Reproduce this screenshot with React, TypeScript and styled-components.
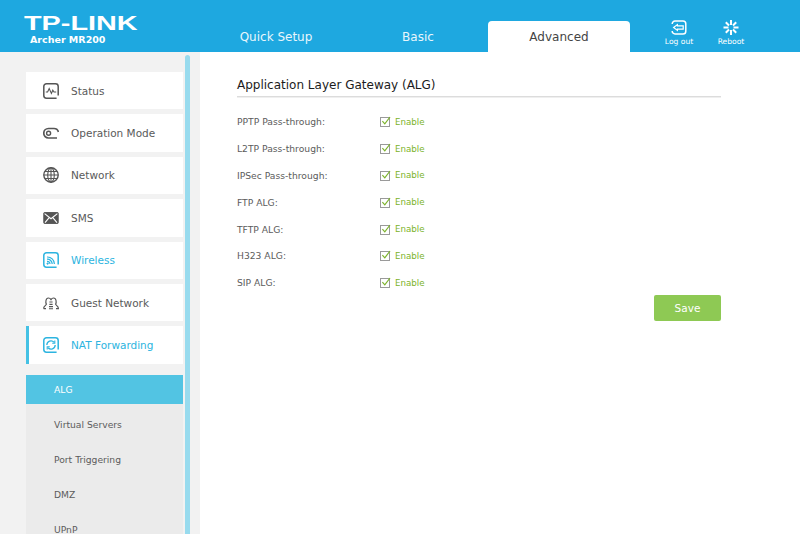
import React from "react";
import styled, { createGlobalStyle } from "styled-components";

const GlobalStyle = createGlobalStyle`
	html, body {
		margin: 0;
		padding: 0;
		background: #fff;
		overflow: hidden;
	}
	* {
		box-sizing: border-box;
	}
	body {
		font-family: "DejaVu Sans", Verdana, sans-serif;
	}
`;

const Page = styled.div`
	width: 800px;
	height: 534px;
	display: flex;
	flex-direction: column;
	overflow: hidden;
`;

const Header = styled.header`
	height: 52px;
	flex: none;
	display: flex;
	background: #1ea8e0;
	color: #fff;
`;

const Brand = styled.div`
	width: 198px;
	flex: none;
	padding: 15px 0 0 24px;
`;

const LogoText = styled.div`
	font-family: "Liberation Sans", Arial, sans-serif;
	font-weight: 700;
	font-size: 20px;
	line-height: 17px;
	height: 17px;
	transform: scaleX(1.44);
	transform-origin: left center;
	white-space: nowrap;
`;

const Model = styled.div`
	font-size: 9.5px;
	font-weight: 700;
	line-height: 11px;
	margin: 2px 0 0 6px;
	white-space: nowrap;
`;

const Tabs = styled.nav`
	display: flex;
	align-items: flex-end;
	height: 52px;
`;

const Tab = styled.div<{ $active?: boolean; $width: number }>`
	width: ${(p) => p.$width}px;
	height: 31px;
	border-radius: 4px 4px 0 0;
	display: flex;
	align-items: center;
	justify-content: center;
	font-size: 12px;
	margin-left: ${(p) => (p.$active ? "6px" : "0")};
	background: ${(p) => (p.$active ? "#fff" : "transparent")};
	color: ${(p) => (p.$active ? "#444" : "#e8f6fc")};
`;

const HeaderActions = styled.div`
	display: flex;
	margin-left: 34px;
	padding-top: 20px;
	gap: 22px;
`;

const HeaderAction = styled.div`
	display: flex;
	flex-direction: column;
	align-items: center;
	width: 30px;
	font-size: 7.6px;
	line-height: 10px;
	white-space: nowrap;
	color: #fff;

	svg {
		display: block;
		margin-bottom: 2px;
	}
`;

const Body = styled.div`
	flex: 1;
	display: flex;
	min-height: 0;
`;

const Sidebar = styled.aside`
	width: 200px;
	flex: none;
	background: #f2f2f2;
	position: relative;
	padding: 20px 17px 0 26px;
	overflow: hidden;
`;

const ScrollThumb = styled.div`
	position: absolute;
	top: 3px;
	bottom: -4px;
	left: 185px;
	width: 5px;
	border-radius: 3px;
	background: #98dbee;
`;

const MenuItem = styled.div<{ $active?: boolean; $current?: boolean }>`
	height: 37.4px;
	margin-bottom: 5px;
	background: #fff;
	display: flex;
	align-items: center;
	padding-left: 17px;
	gap: 12px;
	font-size: 10.5px;
	color: ${(p) => (p.$active ? "#2cb4e0" : "#5a5a5a")};
	position: relative;
	white-space: nowrap;

	&::before {
		content: "";
		display: ${(p) => (p.$current ? "block" : "none")};
		position: absolute;
		left: 0;
		top: 0;
		bottom: 0;
		width: 3px;
		background: #45c1e4;
	}
`;

const SubMenu = styled.div`
	margin-top: 11px;
	background: #ebebeb;
`;

const SubItem = styled.div<{ $active?: boolean }>`
	height: 35px;
	display: flex;
	align-items: center;
	padding-left: 28px;
	font-size: 9.2px;
	background: ${(p) => (p.$active ? "#52c4e3" : "transparent")};
	color: ${(p) => (p.$active ? "#fff" : "#5c5c5c")};
	${(p) => (p.$active ? "height: 29px; margin-bottom: 3px;" : "")}
`;

const Content = styled.main`
	flex: 1;
	padding: 24px 79px 0 37px;
`;

const Title = styled.h2`
	margin: 0 0 11.5px;
	height: 21px;
	font-size: 12px;
	font-weight: 400;
	line-height: 19px;
	color: #1c1c1c;
	border-bottom: 1px solid #dcdcdc;
	box-shadow: 0 1px 0 #efefef;
`;

const Row = styled.div`
	height: 26.8px;
	display: flex;
	align-items: center;
	font-size: 9.2px;
	color: #5c5c5c;
`;

const RowLabel = styled.div`
	width: 143px;
`;

const CheckLabel = styled.label`
	display: flex;
	align-items: center;
	gap: 4px;
	font-size: 8.7px;
	color: #7cb32c;
`;

const SaveRow = styled.div`
	display: flex;
	justify-content: flex-end;
	margin-top: -1px;
`;

const SaveButton = styled.button`
	width: 67px;
	height: 26px;
	border: 0;
	border-radius: 2px;
	background: #8ec954;
	color: #fff;
	font-family: inherit;
	font-size: 10.5px;
	font-weight: 400;
	padding: 0;
`;

const CheckIcon = () => (
	<svg width="11" height="11" viewBox="0 0 11 11" fill="none">
		<rect x="0.5" y="1.5" width="9" height="9" stroke="#9a9a9a" fill="#fff" />
		<path d="M2.4 5.2 L4.8 7.8 L10 1" stroke="#7cb32c" strokeWidth="1.2" />
	</svg>
);

const frame =
	"M13.6 15.2 H3.5 A2.7 2.7 0 0 1 .8 12.5 V3.5 A2.7 2.7 0 0 1 3.5 .8 H12.5 A2.7 2.7 0 0 1 15.2 3.5 V12.5";

const icons: Record<string, React.ReactNode> = {
	status: (
		<>
			<path d={frame} strokeWidth="1.5" />
			<path d="M2.8 9 H4.6 L6.2 5.6 L8.4 10.4 L9.8 7.2 L11 9 H13.2" strokeWidth="1.1" />
		</>
	),
	mode: (
		<>
			<path d="M14 13 H5.5 A4.5 4.5 0 0 1 5.5 3.5 H11 A4.5 4.5 0 0 1 15.4 7" strokeWidth="1.7" />
			<circle cx="5.6" cy="8.2" r="2" strokeWidth="1.4" />
		</>
	),
	network: (
		<>
			<circle cx="8" cy="8" r="7.2" strokeWidth="1.4" />
			<ellipse cx="8" cy="8" rx="3.3" ry="7.2" strokeWidth="1.1" />
			<path d="M8 .8 V15.2 M.8 8 H15.2 M1.8 4.5 H14.2 M1.8 11.5 H14.2" strokeWidth="1.1" />
		</>
	),
	sms: (
		<>
			<rect x=".8" y="2.6" width="14.4" height="10.8" rx=".6" fill="#555" strokeWidth="1" />
			<path d="M1.6 3.6 L8 8.8 L14.4 3.6 M2 12.6 L6.2 7.6 M14 12.6 L9.8 7.6" stroke="#fff" strokeWidth="1.1" />
		</>
	),
	wireless: (
		<>
			<path d={frame} strokeWidth="1.5" />
			<path d="M4 5 A7 7 0 0 1 11.4 12 M4 7.2 A4.8 4.8 0 0 1 9.2 12 M4 9.4 A2.6 2.6 0 0 1 7 12" strokeWidth="1.2" />
			<circle cx="4.6" cy="11.6" r=".8" fill="#2cb4e0" strokeWidth=".6" />
		</>
	),
	guest: (
		<>
			<path d="M.6 13.6 C.6 10.8 3 10.8 3.4 9.2 C2.4 7.6 2.6 3 5.4 3 C6.6 3 7.4 3.6 8 4.6 C8.6 3.6 9.4 3 10.6 3 C13.4 3 13.6 7.6 12.6 9.2 C13 10.8 15.4 10.8 15.4 13.6 H13" strokeWidth="1.2" />
			<path d="M3 13.6 H.6 M6.4 7 H9.6 M6.4 9.4 H9.6 M6 11.6 H10 M6 13.8 H10" strokeWidth="1.1" />
		</>
	),
	nat: (
		<>
			<path d={frame} strokeWidth="1.5" />
			<path d="M3.8 8 A4.2 4.2 0 0 1 11 5.2 M12.2 8 A4.2 4.2 0 0 1 5 10.8" strokeWidth="1.3" />
			<path d="M11.8 3.6 V6.2 H9.2 M4.2 12.4 V9.8 H6.8" strokeWidth="1.1" />
		</>
	)
};

const MenuIcon = ({ name, color }: { name: string; color: string }) => (
	<svg width="16" height="16" viewBox="0 0 16 16" fill="none" stroke={color}>
		{icons[name]}
	</svg>
);

const menu = [
	{ key: "status", label: "Status" },
	{ key: "mode", label: "Operation Mode" },
	{ key: "network", label: "Network" },
	{ key: "sms", label: "SMS" },
	{ key: "wireless", label: "Wireless", active: true },
	{ key: "guest", label: "Guest Network" },
	{ key: "nat", label: "NAT Forwarding", active: true, current: true }
];

const subMenu = ["ALG", "Virtual Servers", "Port Triggering", "DMZ", "UPnP"];

const rows = [
	"PPTP Pass-through:",
	"L2TP Pass-through:",
	"IPSec Pass-through:",
	"FTP ALG:",
	"TFTP ALG:",
	"H323 ALG:",
	"SIP ALG:"
];

export default function App() {
	return (
		<Page>
			<GlobalStyle />
			<Header>
				<Brand>
					<LogoText>TP-LINK</LogoText>
					<Model>Archer MR200</Model>
				</Brand>
				<Tabs>
					<Tab $width={156}>Quick Setup</Tab>
					<Tab $width={128}>Basic</Tab>
					<Tab $width={142} $active>
						Advanced
					</Tab>
				</Tabs>
				<HeaderActions>
					<HeaderAction>
						<svg width="16" height="15" viewBox="0 0 16 15" fill="none" stroke="#fff">
							<path d="M1.2 4 A2.8 2.8 0 0 1 4 1 H12 A2.8 2.8 0 0 1 14.8 3.8 V11.2 A2.8 2.8 0 0 1 12 14 H4 A2.8 2.8 0 0 1 1.2 11" strokeWidth="1.5" />
							<path d="M2.6 7.5 L6.4 4.6 V5.8 H12.2 V9.2 H6.4 V10.4 Z" strokeWidth="1.2" />
						</svg>
						Log out
					</HeaderAction>
					<HeaderAction>
						<svg width="16" height="15" viewBox="0 0 16 15" fill="none" stroke="#fff" strokeWidth="2">
							<path d="M8 0 V5 M8 10 V15 M.5 7.5 H5.5 M10.5 7.5 H15.5 M2.8 2.3 L6 5.5 M13.2 2.3 L10 5.5 M2.8 12.7 L6 9.5 M13.2 12.7 L10 9.5" />
						</svg>
						Reboot
					</HeaderAction>
				</HeaderActions>
			</Header>
			<Body>
				<Sidebar>
					<ScrollThumb />
					{menu.map((item) => (
						<MenuItem key={item.key} $active={item.active} $current={item.current}>
							<MenuIcon name={item.key} color={item.active ? "#2cb4e0" : "#555"} />
							{item.label}
						</MenuItem>
					))}
					<SubMenu>
						{subMenu.map((label, i) => (
							<SubItem key={label} $active={i === 0}>
								{label}
							</SubItem>
						))}
					</SubMenu>
				</Sidebar>
				<Content>
					<Title>Application Layer Gateway (ALG)</Title>
					{rows.map((label) => (
						<Row key={label}>
							<RowLabel>{label}</RowLabel>
							<CheckLabel>
								<CheckIcon />
								Enable
							</CheckLabel>
						</Row>
					))}
					<SaveRow>
						<SaveButton>Save</SaveButton>
					</SaveRow>
				</Content>
			</Body>
		</Page>
	);
}
